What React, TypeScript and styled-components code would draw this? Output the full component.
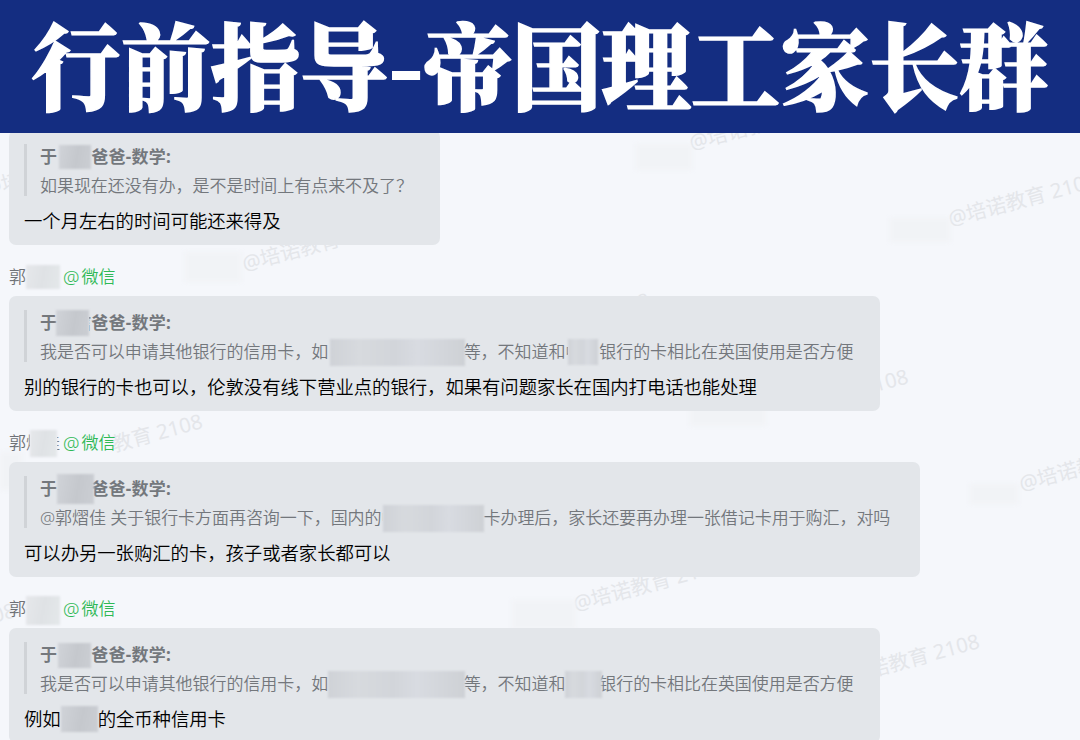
import React from 'react'
import styled, { createGlobalStyle } from 'styled-components'

type Tone = 'name' | 'quote' | 'sender'

interface Mask {
  before: number
  width: number
  after: number
  height?: number
  shift?: number
  tone: Tone
}

interface Sliver {
  char: string
  show: number
  side: 'start' | 'end'
}

type Part = string | Mask | Sliver

interface Message {
  sender?: Part[]
  width: number
  name: Part[]
  quote: Part[]
  reply: Part[]
}

const bank: Part[] = [
  '我是否可以申请其他银行的信用卡，如',
  { before: 2, width: 135, after: -1.5, height: 27, tone: 'quote' },
  '等，不知道和',
  { char: '中', show: 3, side: 'start' },
  { before: 0, width: 30, after: 0.9, height: 26, tone: 'quote' },
  '银行的卡相比在英国使用是否方便'
]

const messages: Message[] = [
  {
    width: 431,
    name: ['于', { before: 2, width: 32, after: 0, height: 24, tone: 'name' }, '爸爸-数学:'],
    quote: ['如果现在还没有办，是不是时间上有点来不及了？'],
    reply: ['一个月左右的时间可能还来得及']
  },
  {
    sender: ['郭', { before: 0, width: 34, after: 3, height: 24, tone: 'sender' }],
    width: 871,
    name: [
      '于',
      { before: -1, width: 33, after: 0, height: 26, tone: 'name' },
      { char: '信', show: 2, side: 'end' },
      '爸爸-数学:'
    ],
    quote: bank,
    reply: ['别的银行的卡也可以，伦敦没有线下营业点的银行，如果有问题家长在国内打电话也能处理']
  },
  {
    sender: [
      '郭',
      { char: '熠', show: 4, side: 'start' },
      { before: 0, width: 27, after: 0, height: 27, shift: 1, tone: 'sender' },
      { char: '佳', show: 3, side: 'end' },
      { before: 0, width: 0, after: 3, tone: 'sender' }
    ],
    width: 911,
    name: ['于', { before: 0, width: 37, after: -3, height: 30, tone: 'name' }, '爸爸-数学:'],
    quote: [
      '@郭熠佳 关于银行卡方面再咨询一下，国内的',
      { char: '中', show: 2, side: 'start' },
      { before: 0, width: 101, after: -1, height: 27, tone: 'quote' },
      '卡办理后，家长还要再办理一张借记卡用于购汇，对吗'
    ],
    reply: ['可以办另一张购汇的卡，孩子或者家长都可以']
  },
  {
    sender: ['郭', { before: 0, width: 34, after: 3, height: 29, shift: 2, tone: 'sender' }],
    width: 871,
    name: ['于', { before: 1, width: 33, after: 0, height: 25, tone: 'name' }, '爸爸-数学:'],
    quote: [
      '我是否可以申请其他银行的信用卡，如',
      { before: 0, width: 137, after: -1.5, height: 27, tone: 'quote' },
      '等，不知道和',
      { before: 0, width: 37, after: -3.1, height: 27, tone: 'quote' },
      '银行的卡相比在英国使用是否方便'
    ],
    reply: ['例如', { before: 0, width: 37, after: 0, height: 26, tone: 'name' }, '的全币种信用卡']
  }
]

const full = '@培诺教育 2108'

// x and y are the centre of the @ sign, skip is the blanked part before the text
const marks = [
  { x: -7, y: 185, skip: 0, text: full },
  { x: 252, y: 260, skip: 0, text: full },
  { x: 699, y: 139, skip: 0, text: full },
  { x: 64, y: 456, skip: 59.5, text: '教育 2108' },
  { x: 511, y: 335, skip: 0, text: full },
  { x: 958, y: 215, skip: 0, text: full },
  { x: 770, y: 411, skip: 105.5, text: '2108' },
  { x: 1029, y: 480, skip: 0, text: full },
  { x: -123, y: 645, skip: 0, text: full },
  { x: 583, y: 600, skip: 0, text: full },
  { x: 841, y: 676, skip: 0, text: full }
]

const smudges = [
  [185, 252, 56, 30],
  [636, 144, 56, 26],
  [890, 218, 60, 24],
  [690, 406, 76, 20],
  [0, 452, 22, 38],
  [970, 484, 48, 20],
  [512, 600, 64, 30]
]

const renderPart = (part: Part, i: number) => {
  if (typeof part === 'string') return <span key={i}>{part}</span>
  if ('char' in part) {
    return (
      <Clip key={i} $show={part.show} $side={part.side}>
        {part.char}
      </Clip>
    )
  }
  return (
    <Redaction
      key={i}
      $tone={part.tone}
      $before={part.before}
      $width={part.width}
      $after={part.after}
      $height={part.height || 0}
      $shift={part.shift || 0}
    />
  )
}

const App = () => {
  return (
    <Page>
      <GlobalStyle />
      <Banner>
        <Title>
          行前指导<Dash>-</Dash>帝国理工家长群
        </Title>
      </Banner>
      <Chat>
        <Backdrop>
          {marks.map(({ x, y, skip, text }) => (
            <Watermark key={`${x}-${y}`} $x={x} $y={y} $skip={skip}>
              {text}
            </Watermark>
          ))}
          {smudges.map(([x, y, w, h]) => (
            <Smudge key={`${x}-${y}`} $x={x} $y={y} $w={w} $h={h} />
          ))}
        </Backdrop>
        {messages.map((message, i) => (
          <Item key={i}>
            {message.sender && (
              <Sender>
                {message.sender.map(renderPart)}
                <At>@</At>
                <Source>微信</Source>
              </Sender>
            )}
            <Bubble $width={message.width}>
              <Quote>
                <Bar />
                <div>
                  <Name>{message.name.map(renderPart)}</Name>
                  <QuoteText>{message.quote.map(renderPart)}</QuoteText>
                </div>
              </Quote>
              <Reply>{message.reply.map(renderPart)}</Reply>
            </Bubble>
          </Item>
        ))}
      </Chat>
    </Page>
  )
}

const GlobalStyle = createGlobalStyle`
  body {
    margin: 0;
    overflow: hidden;
    font-family: 'Noto Sans', 'Noto Sans CJK SC', sans-serif;
  }
`

const Page = styled.div`
  width: 1080px;
  height: 740px;
  display: flex;
  flex-direction: column;
  overflow: hidden;
  position: relative;
  background: #f5f7fb;
`

const Banner = styled.header`
  flex: none;
  height: 133px;
  box-sizing: border-box;
  padding-bottom: 8px;
  display: flex;
  align-items: center;
  justify-content: center;
  background: #142d81;
  z-index: 2;
`

const Title = styled.h1`
  margin: 0;
  display: flex;
  font-family: 'Noto Serif CJK SC', 'Noto Sans CJK SC', serif;
  font-size: 89.3px;
  font-weight: 900;
  line-height: 117px;
  white-space: nowrap;
  color: #fff;
  -webkit-text-stroke: 1.5px #fff;
  transform: scaleY(1.06);
`

const Dash = styled.span`
  width: 34px;
  text-align: center;
  -webkit-text-stroke: 2px #fff;
`

const Chat = styled.main`
  flex: 1;
  min-height: 0;
  padding-left: 9px;
  margin-top: -3px;
`

const Backdrop = styled.div`
  position: absolute;
  inset: 0;
  overflow: hidden;
`

const Watermark = styled.span<{ $x: number; $y: number; $skip: number }>`
  position: absolute;
  left: ${({ $x }) => $x - 10}px;
  top: ${({ $y }) => $y - 14}px;
  padding-left: ${({ $skip }) => $skip}px;
  font-size: 20.5px;
  line-height: 30px;
  white-space: nowrap;
  color: #e4e6ea;
  transform: rotate(-15deg);
  transform-origin: 10px 15px;
`

const Smudge = styled.i<{ $x: number; $y: number; $w: number; $h: number }>`
  position: absolute;
  left: ${({ $x }) => $x}px;
  top: ${({ $y }) => $y}px;
  width: ${({ $w }) => $w}px;
  height: ${({ $h }) => $h}px;
  background: #f1f3f6;
  filter: blur(2px);
`

const Item = styled.section`
  position: relative;
`

const Sender = styled.div`
  height: 51.1px;
  display: flex;
  align-items: center;
  padding-top: 13px;
  box-sizing: border-box;
  font-size: 17px;
  line-height: 24px;
  font-weight: 350;
  color: #6d7176;
`

const At = styled.span`
  width: 18.5px;
  font-size: 18.5px;
  color: #2fb955;
`

const Source = styled.span`
  color: #2fb955;
`

const Bubble = styled.article<{ $width: number }>`
  width: ${({ $width }) => $width}px;
  height: 115px;
  box-sizing: border-box;
  padding: 14px 0 0 15px;
  border-radius: 7px;
  background: #e3e6ea;
  line-height: 24px;
  white-space: pre;
`

const Quote = styled.blockquote`
  margin: 0;
  display: flex;
  align-items: flex-start;
  gap: 13px;
  font-size: 17px;
  letter-spacing: -0.07px;
`

const Bar = styled.i`
  width: 3px;
  height: 52px;
  background: #d0d3d7;
`

const Name = styled.div`
  height: 26px;
  display: flex;
  align-items: center;
  font-weight: 700;
  letter-spacing: 0.25px;
  color: #74787d;
`

const QuoteText = styled.div`
  height: 32px;
  display: flex;
  align-items: center;
  font-weight: 350;
  letter-spacing: -0.05px;
  color: #73777c;
`

const Reply = styled.p`
  margin: 0;
  height: 38px;
  display: flex;
  align-items: center;
  font-size: 18.4px;
  font-weight: 350;
  letter-spacing: -0.07px;
  color: #000;
`

const fills: Record<Tone, string> = {
  name: 'linear-gradient(100deg, #d0d3d8, #c5c8cd 55%, #cbced3)',
  quote: 'linear-gradient(90deg, #cfd2d7, #d7dade 22%, #d2d5da 48%, #d8dbe1 65%, #ced1d5)',
  sender: 'linear-gradient(100deg, #e6e8eb, #dfe2e5 50%, #e4e8ea)'
}

const Redaction = styled.i<{
  $tone: Tone
  $before: number
  $width: number
  $after: number
  $height: number
  $shift: number
}>`
  flex: none;
  width: ${({ $width }) => $width}px;
  height: ${({ $height }) => $height}px;
  margin: ${({ $shift }) => $shift}px ${({ $after }) => $after}px 0 ${({ $before }) => $before}px;
  background: ${({ $tone }) => fills[$tone]};
  filter: blur(1px);
`

const Clip = styled.span<{ $show: number; $side: 'start' | 'end' }>`
  flex: none;
  width: ${({ $show }) => $show}px;
  display: flex;
  justify-content: ${({ $side }) => `flex-${$side}`};
  overflow: hidden;
`

export default App
